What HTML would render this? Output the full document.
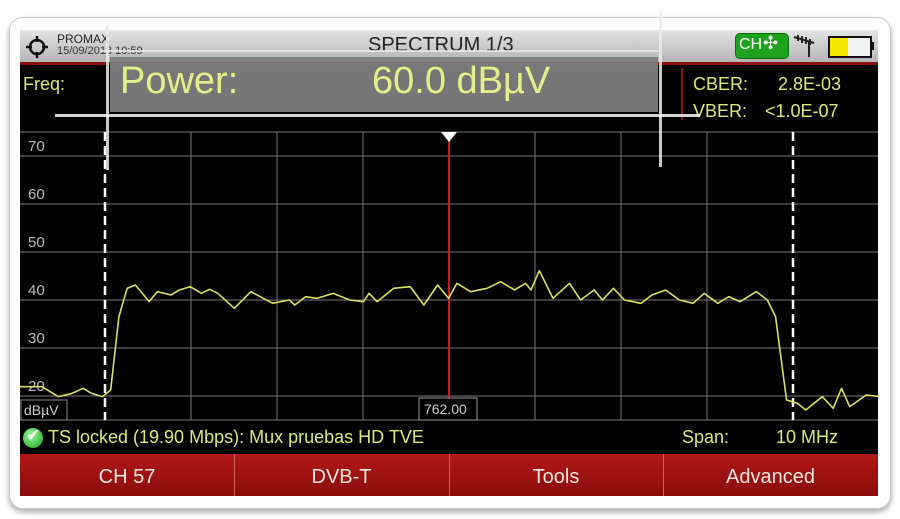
<!DOCTYPE html>
<html><head><style>
body{margin:0;width:900px;height:519px;background:#fff;position:relative;overflow:hidden;font-family:"Liberation Sans",sans-serif}
.frame{position:absolute;left:9px;top:17px;width:880px;height:490px;border-radius:14px;border:1px solid #ccc;box-shadow:0 3px 6px rgba(0,0,0,.35)}
.scr{position:absolute;left:20px;top:30px;width:858px;height:466px;background:#000;overflow:hidden}
.t{position:absolute;white-space:nowrap}
.y{color:#d6ea78}
</style></head><body>
<div class="frame"></div>
<div class="scr">
 <div style="position:absolute;left:0;top:0;width:858px;height:32px;background:linear-gradient(#e4e4e4,#b4b4b4)"></div>
 <div style="position:absolute;left:0;top:32px;width:858px;height:3px;background:#8a1010"></div>
 <svg style="position:absolute;left:5px;top:5px" width="24" height="24" viewBox="0 0 24 24"><circle cx="12" cy="12" r="7" fill="none" stroke="#111" stroke-width="2.5"/><path d="M12 1v6M12 17v6M1 12h6M17 12h6" stroke="#111" stroke-width="2.5"/></svg>
 <div class="t" style="left:37px;top:2px;font-size:12px;color:#222">PROMAX</div>
 <div class="t" style="left:37px;top:15px;font-size:11px;color:#333">15/09/2013 10:59</div>
 <div class="t" style="left:348px;top:4px;font-size:20px;color:#222">SPECTRUM 1/3</div>
 <div style="position:absolute;left:715px;top:3px;width:52px;height:24px;background:#1ea21e;border-radius:5px;border:1px solid #0a6a0a"></div>
 <div class="t" style="left:719px;top:6px;font-size:16px;color:#fff">CH</div>
 <div class="t" style="left:743px;top:3px;font-size:18px;color:#fff">✣</div>
 <svg style="position:absolute;left:772px;top:3px" width="26" height="26"><path d="M2 4L22 10M6 2v6M10 3v7M14 4v7M18 6v6M17 8v16" stroke="#222" stroke-width="2" fill="none"/></svg>
 <div style="position:absolute;left:808px;top:6px;width:40px;height:18px;border:2px solid #111;background:#f2f2f2"></div>
 <div style="position:absolute;left:810px;top:8px;width:18px;height:18px;background:#f2ea00"></div>
 <div style="position:absolute;left:850px;top:12px;width:4px;height:8px;background:#111"></div>
 <div class="t y" style="left:3px;top:44px;font-size:18px">Freq:</div>
 <div style="position:absolute;left:661px;top:38px;width:2px;height:52px;background:#8a1010"></div>
 <div class="t y" style="left:673px;top:44px;font-size:18px">CBER:</div>
 <div class="t y" style="left:758px;top:44px;font-size:18px">2.8E-03</div>
 <div class="t y" style="left:673px;top:71px;font-size:18px">VBER:</div>
 <div class="t y" style="left:745px;top:71px;font-size:18px">&lt;1.0E-07</div>
 <svg style="position:absolute;left:0;top:0" width="858" height="466">
  <g stroke="#777" stroke-width="1">
   <path d="M0 102H858M0 126H858M0 174H858M0 222H858M0 270H858M0 318H858M0 366H858M0 390H858"/>
   <path d="M171 102V390M257 102V390M343 102V390M515 102V390M601 102V390M687 102V390"/>
  </g>
  <g fill="#bbb" font-size="15" font-family="Liberation Sans"><text x="8" y="121">70</text><text x="8" y="169">60</text><text x="8" y="217">50</text><text x="8" y="265">40</text><text x="8" y="313">30</text></g>
  <path d="M85 102V390M773 102V390" stroke="#fff" stroke-width="2.5" stroke-dasharray="9 5"/>
  <path d="M429 102V390" stroke="#d01818" stroke-width="2"/>
  <path d="M421 102h16l-8 10z" fill="#fff"/>
  <g transform="translate(0,220) scale(0.5495,0.3333)"><polyline vector-effect="non-scaling-stroke" fill="none" stroke="#d8e060" stroke-width="1.6" stroke-linejoin="round" points="0,410 40,410 70,440 95,430 115,415 130,430 150,440 165,420 180,200 195,115 210,105 235,155 250,125 275,135 290,120 310,110 330,130 345,118 360,130 390,175 420,125 460,160 490,150 500,165 520,140 540,145 570,130 600,150 625,155 635,130 650,155 680,115 710,110 735,165 760,105 780,145 795,100 820,125 850,115 875,95 900,120 920,100 930,120 945,62 970,145 1000,100 1020,150 1045,120 1060,150 1080,115 1100,150 1130,160 1150,135 1175,120 1200,150 1225,160 1245,130 1270,160 1290,140 1310,155 1340,125 1360,150 1375,200 1395,450 1415,460 1430,480 1460,440 1480,475 1495,415 1510,470 1540,435 1566,440"/></g>
  <text x="8" y="361" fill="#bbb" font-size="15" font-family="Liberation Sans">20</text>
  <rect x="1" y="370" width="46" height="20" fill="#000" stroke="#888"/>
  <text x="4" y="385" fill="#ccc" font-size="14" font-family="Liberation Sans">dBµV</text>
  <rect x="399" y="368" width="58" height="22" fill="#000" stroke="#999"/>
  <text x="404" y="384" fill="#ccc" font-size="14" font-family="Liberation Sans">762.00</text>
 </svg>
 <div style="position:absolute;left:3px;top:398px;width:20px;height:20px;border-radius:50%;background:radial-gradient(circle at 40% 35%,#9f9,#1a9a1a)"></div>
 <div class="t" style="left:6px;top:396px;font-size:17px;color:#fff">✔</div>
 <div class="t y" style="left:28px;top:397px;font-size:18px">TS locked (19.90 Mbps): Mux pruebas HD TVE</div>
 <div class="t y" style="left:662px;top:397px;font-size:18px">Span:</div>
 <div class="t y" style="left:756px;top:397px;font-size:18px">10 MHz</div>
 <div style="position:absolute;left:0;top:424px;width:858px;height:42px;background:linear-gradient(#b01818,#8c0c0c)"></div>
 <div style="position:absolute;left:214px;top:424px;width:1px;height:42px;background:#d06060"></div>
 <div style="position:absolute;left:429px;top:424px;width:1px;height:42px;background:#d06060"></div>
 <div style="position:absolute;left:643px;top:424px;width:1px;height:42px;background:#d06060"></div>
 <div class="t" style="left:0;width:214px;text-align:center;top:436px;font-size:20px;color:#f4e8e0">CH 57</div>
 <div class="t" style="left:214px;width:215px;text-align:center;top:436px;font-size:20px;color:#f4e8e0">DVB-T</div>
 <div class="t" style="left:429px;width:214px;text-align:center;top:436px;font-size:20px;color:#f4e8e0">Tools</div>
 <div class="t" style="left:643px;width:215px;text-align:center;top:436px;font-size:20px;color:#f4e8e0">Advanced</div>
</div>
<div style="position:absolute;left:110px;top:57px;width:548px;height:55px;background:rgba(125,125,125,.95)"></div>
<div class="t" style="left:120px;top:60px;font-size:38px;color:#e2f08a">Power:</div>
<div class="t" style="left:372px;top:60px;font-size:38px;color:#e2f08a">60.0 dBµV</div>
<div style="position:absolute;left:55px;top:114px;width:645px;height:3px;background:rgba(235,235,235,.9)"></div>
<div style="position:absolute;left:106px;top:25px;width:3px;height:145px;background:rgba(235,235,235,.85)"></div>
<div style="position:absolute;left:659px;top:12px;width:3px;height:155px;background:rgba(235,235,235,.85)"></div>
<div style="position:absolute;left:100px;top:50px;width:560px;height:2px;background:rgba(235,235,235,.8)"></div>
</body></html>
